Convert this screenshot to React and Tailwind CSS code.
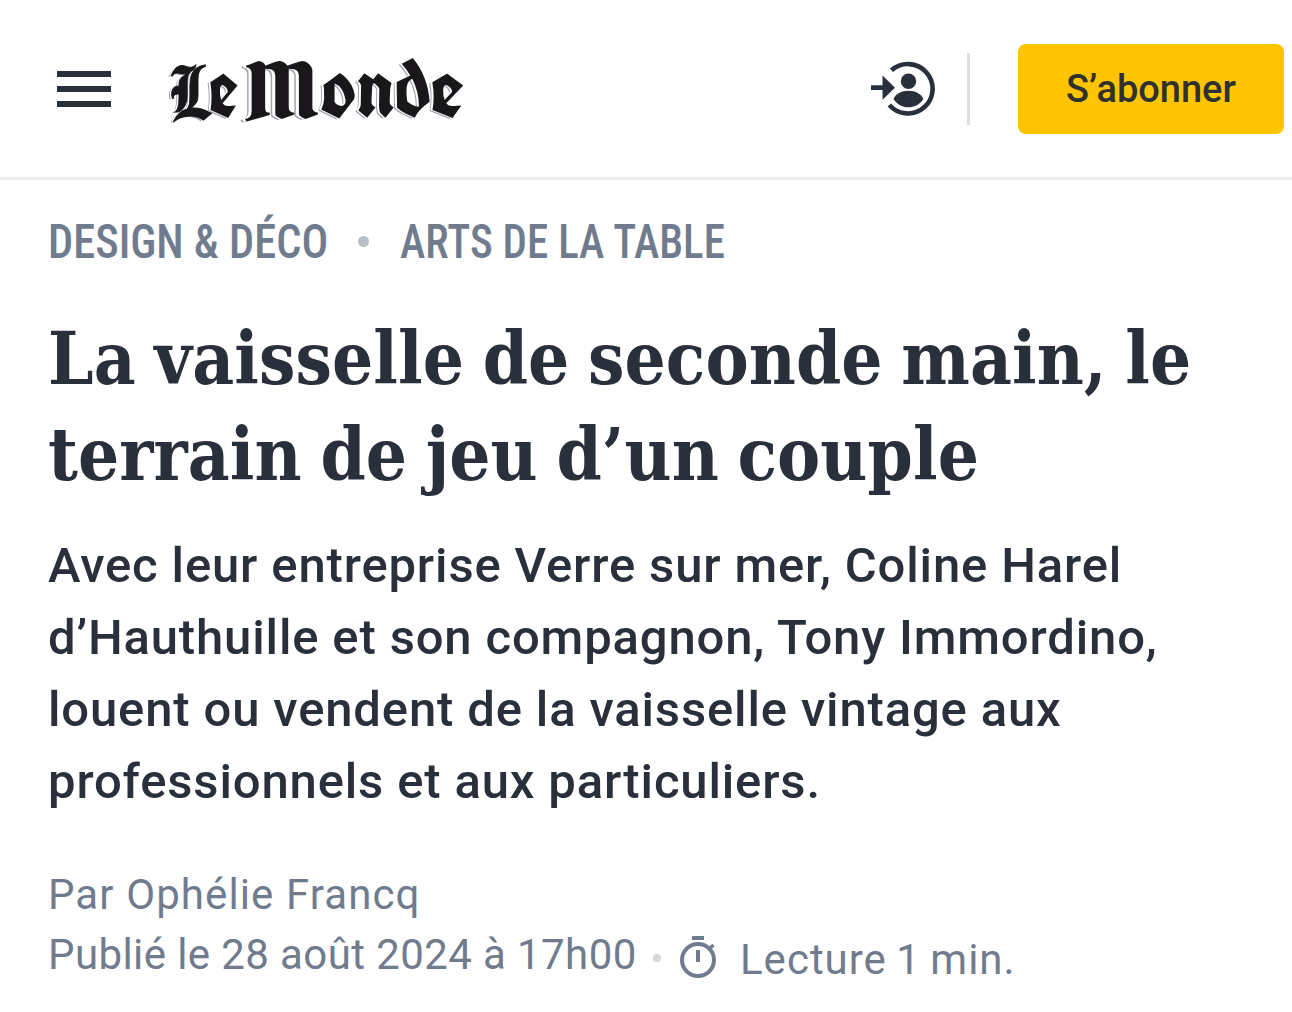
const TITLE = ['La vaisselle de seconde main, le', 'terrain de jeu d’un couple']

const DECK = [
  'Avec leur entreprise Verre sur mer, Coline Harel',
  'd’Hauthuille et son compagnon, Tony Immordino,',
  'louent ou vendent de la vaisselle vintage aux',
  'professionnels et aux particuliers.',
]

// Each letter group takes the blackletter face that suits it
function Logo() {
  return (
    <a className="mt-[47px] ml-[57px] flex h-20 w-[297px] items-baseline font-['UnifrakturCook','Liberation_Serif',serif] text-[86px] leading-[80px] font-bold whitespace-nowrap text-[#1a171b] [text-shadow:-2px_0_0_#fff,-3px_1px_0_#a3a5ae]">
      <span className="w-[41px] origin-left scale-x-[0.88] font-['Manufacturing_Consent','UnifrakturCook','Liberation_Serif',serif] font-normal [-webkit-text-stroke:1px_#1a171b]">
        L
      </span>
      <span className="w-[37px] origin-left scale-x-[0.88]">e</span>
      <span className="w-[74px] origin-left scale-x-[1.5] font-['Pirata_One','UnifrakturCook','Liberation_Serif',serif] text-[75px] font-normal">
        M
      </span>
      <span>onde</span>
    </a>
  )
}

function LoginIcon() {
  return (
    <svg width="64" height="56" viewBox="0 0 64 56" fill="none">
      <path d="M20.5 9.3A24.7 24.7 0 1 1 18.3 44" stroke="#2a303b" strokeWidth="4.6" />
      <path d="M0 24.3H11.5V14.5L24 26.7L11.5 38.8V29H0Z" fill="#2a303b" />
      <circle cx="37.5" cy="20.3" r="7.7" fill="#2a303b" />
      <path d="M22.5 38C24.5 33 30.5 29.8 37.3 29.8C44.5 29.8 50.5 33 52.3 38C49 43.5 43.5 46.3 37.3 46.3C31 46.3 26 43.5 22.5 38Z" fill="#2a303b" />
    </svg>
  )
}

function TimerIcon() {
  return (
    <svg width="36" height="43" viewBox="0 0 36 43" fill="none" stroke="#717b8e">
      <circle cx="18" cy="24" r="16" strokeWidth="4" />
      <path d="M12 2H24M18 14V26" strokeWidth="4" />
      <path d="M28.5 13.5L33.5 9" strokeWidth="3.5" />
    </svg>
  )
}

export default function App() {
  return (
    <div className="h-[1012px] w-[1292px] overflow-hidden bg-white text-[#2a303b]">
      {/* Header */}
      <header className="flex h-[180px] items-start border-b-[3px] border-[#ededee] pr-2">
        <button className="mt-[71px] ml-[57px] flex w-[54px] flex-col gap-[9px]">
          <span className="h-[6px] w-full bg-[#2a303b]" />
          <span className="h-[6px] w-full bg-[#2a303b]" />
          <span className="h-[6px] w-full bg-[#2a303b]" />
        </button>
        <Logo />
        <div className="mt-[61px] ml-auto"><LoginIcon /></div>
        <span className="mt-[53px] ml-[32px] h-[72px] w-[3px] bg-[#dedfe3]" />
        <button className="mt-11 ml-[48px] h-[90px] w-[266px] rounded-lg bg-[#fec400] font-[Roboto,sans-serif] text-[38px] font-medium whitespace-nowrap text-[#2f312f]">
          S’abonner
        </button>
      </header>

      <main className="px-12 whitespace-nowrap">
        <nav className="mt-8 flex h-[60px] items-center font-['Roboto_Condensed',Roboto,sans-serif] text-[49px] font-medium text-[#717b8e]">
          <a className="w-[280px] origin-left scale-x-[0.906]">DESIGN &amp; DÉCO</a>
          <span className="mb-0.5 ml-[30px] h-[11px] w-[11px] rounded-full bg-[#babec7]" />
          <a className="ml-[31px] origin-left scale-x-[0.878]">ARTS DE LA TABLE</a>
        </nav>

        <h1 className="mt-[39px] font-['DejaVu_Serif_Condensed','DejaVu_Serif',serif] text-[72px] leading-[96px] font-bold tracking-[0.1px] [word-spacing:-4px]">
          {TITLE.map((line) => <span key={line} className="block">{line}</span>)}
        </h1>

        <p className="mt-[27px] font-[Roboto,sans-serif] text-[49px] leading-[72px] font-medium tracking-[0.85px]">
          {DECK.map((line) => <span key={line} className="block">{line}</span>)}
        </p>

        {/* Byline */}
        <div className="mt-[47px] font-[Roboto,sans-serif] text-[42px] leading-[60px] font-normal text-[#717b8e]">
          <p className="tracking-[1.1px]">Par Ophélie Francq</p>
          <div className="flex h-[60px]">
            <time className="w-[605px] tracking-[0.4px]">Publié le 28 août 2024 à 17h00</time>
            <span className="mt-[29px] h-2 w-2 rounded-full bg-[#d5d7dc]" />
            <span className="mt-[11px] ml-[19px]"><TimerIcon /></span>
            <span className="mt-[5px] ml-6 tracking-[1px] [word-spacing:-2px]">Lecture 1 min.</span>
          </div>
        </div>
      </main>
    </div>
  )
}
